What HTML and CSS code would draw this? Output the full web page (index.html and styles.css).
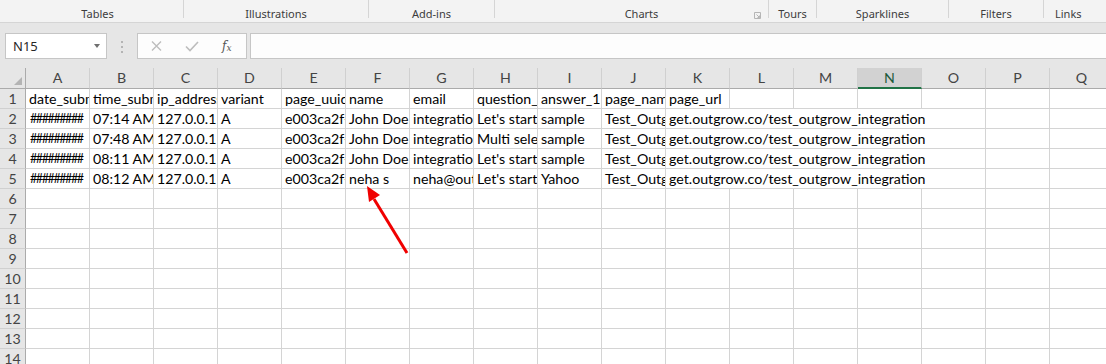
FILE: index.html
```html
<!DOCTYPE html>
<html lang="en">
<head>
    <meta charset="UTF-8">
    <title>Book1 - Excel</title>
    <link rel="stylesheet" href="styles.css">
</head>
<body>
    <div class="ribbon">
        <div class="ribbon-group group-tables">Tables</div>
        <div class="ribbon-sep"></div>
        <div class="ribbon-group group-illustrations">Illustrations</div>
        <div class="ribbon-sep"></div>
        <div class="ribbon-group group-addins">Add-ins</div>
        <div class="ribbon-sep"></div>
        <div class="ribbon-group group-charts">
            <span class="group-label">Charts</span>
            <svg class="launcher" width="7" height="7" viewBox="0 0 7 7" fill="none" stroke="#b5b5b5" stroke-width="1">
                <path d="M0.5 6.5V0.5h6v6z"></path>
                <path d="M2.5 2.5l3 3M3.5 5.5h2v-2"></path>
            </svg>
        </div>
        <div class="ribbon-sep"></div>
        <div class="ribbon-group group-tours">Tours</div>
        <div class="ribbon-sep"></div>
        <div class="ribbon-group group-sparklines">Sparklines</div>
        <div class="ribbon-sep"></div>
        <div class="ribbon-group group-filters">Filters</div>
        <div class="ribbon-sep"></div>
        <div class="ribbon-group group-links">Links</div>
    </div>

    <div class="formula-bar">
        <div class="name-box">
            <span class="name-value">N15</span>
            <span class="name-caret"></span>
        </div>
        <div class="grip">
            <span></span><span></span><span></span>
        </div>
        <div class="fx-box">
            <svg class="fx-cancel" width="11" height="10" viewBox="0 0 11 10" fill="none" stroke="#bdbdbd" stroke-width="1.4">
                <path d="M1 0.5l9 9M10 0.5l-9 9"></path>
            </svg>
            <svg class="fx-enter" width="14" height="11" viewBox="0 0 14 11" fill="none" stroke="#bdbdbd" stroke-width="1.6">
                <path d="M1 5.5l4 4 8-8.5"></path>
            </svg>
            <span class="fx-label"><i>f</i><sub>x</sub></span>
        </div>
        <div class="formula-input"></div>
    </div>

    <div class="sheet">
        <div class="grid"></div>
        <svg class="arrow" width="1106" height="296" viewBox="0 0 1106 296">
            <line x1="407" y1="185" x2="374" y2="131" stroke="#f00000" stroke-width="3"></line>
            <polygon points="367,118 380,127 369,134" fill="#f00000"></polygon>
        </svg>
    </div>

    <script>
        // 시트 데이터 (1~5행)
        const columns = 'ABCDEFGHIJKLMNOPQ'.split('');
        const sheetRows = [
            ['date_submitted', 'time_submitted', 'ip_address', 'variant', 'page_uuid', 'name', 'email', 'question_1', 'answer_1', 'page_name', 'page_url'],
            ['#########', '07:14 AM UTC', '127.0.0.1', 'A', 'e003ca2f-c41d', 'John Doe', 'integration@outgrow.co', "Let's start the quiz", 'sample', 'Test_Outgrow_Integration', 'get.outgrow.co/test_outgrow_integration'],
            ['#########', '07:48 AM UTC', '127.0.0.1', 'A', 'e003ca2f-c41d', 'John Doe', 'integration@outgrow.co', 'Multi select question', 'sample', 'Test_Outgrow_Integration', 'get.outgrow.co/test_outgrow_integration'],
            ['#########', '08:11 AM UTC', '127.0.0.1', 'A', 'e003ca2f-c41d', 'John Doe', 'integration@outgrow.co', "Let's start the quiz", 'sample', 'Test_Outgrow_Integration', 'get.outgrow.co/test_outgrow_integration'],
            ['#########', '08:12 AM UTC', '127.0.0.1', 'A', 'e003ca2f-c41d', 'neha s', 'neha@outgrow.co', "Let's start the quiz", 'Yahoo', 'Test_Outgrow_Integration', 'get.outgrow.co/test_outgrow_integration'],
        ];
        const totalRows = 14;
        const selectedColumn = 'N';

        const grid = document.querySelector('.grid');

        function addCell(className, text) {
            const cell = document.createElement('div');
            cell.className = className;
            if (text) cell.textContent = text;
            grid.appendChild(cell);
            return cell;
        }

        // 열 머리글
        addCell('corner');
        columns.forEach(col => {
            addCell(col === selectedColumn ? 'col-head selected' : 'col-head', col);
        });

        // 행
        for (let r = 1; r <= totalRows; r++) {
            addCell('row-head', String(r));
            const values = sheetRows[r - 1] || [];
            for (let c = 0; c < columns.length; c++) {
                const text = values[c] || '';
                // 긴 URL은 빈 옆 칸(L~O)으로 넘쳐 보임
                if (r > 1 && c === 10 && text) {
                    addCell('cell spill', text);
                    c += 4;
                    continue;
                }
                // 날짜 칸이 좁아서 ### 표시
                addCell(text.startsWith('#') ? 'cell hash' : 'cell', text);
            }
        }
    </script>
</body>
</html>
```

FILE: styles.css
```css
* {
    margin: 0;
    padding: 0;
    box-sizing: border-box;
}

body {
    width: 1106px;
    height: 364px;
    overflow: hidden;
    background-color: #ffffff;
    font-family: Lato, 'Liberation Sans', sans-serif;
}

/* ribbon group labels */
.ribbon {
    display: flex;
    align-items: flex-start;
    height: 23px;
    background-color: #f3f3f3;
    border-bottom: 1px solid #d5d5d5;
    font-family: 'Noto Sans', 'Open Sans', sans-serif;
    font-size: 11px;
    color: #3c3c3c;
    white-space: nowrap;
    overflow: hidden;
}

.ribbon-group {
    display: flex;
    align-items: center;
    justify-content: center;
    height: 22px;
    padding-top: 5px;
    flex-shrink: 0;
}

.ribbon-sep {
    width: 1px;
    height: 18px;
    background-color: #d5d5d5;
    flex-shrink: 0;
}

.group-tables {
    width: 183px;
    padding-left: 12px;
}

.group-illustrations {
    width: 184px;
}

.group-addins {
    width: 125px;
}

.group-charts {
    width: 273px;
}

.group-charts .group-label {
    flex: 1;
    text-align: center;
    padding-left: 34px;
}

.launcher {
    margin: 3px 7px 0 0;
}

.group-tours {
    width: 47px;
}

.group-sparklines {
    width: 131px;
}

.group-filters {
    width: 94px;
}

.group-links {
    width: 62px;
    justify-content: flex-start;
    padding-left: 11px;
}

/* formula bar */
.formula-bar {
    display: flex;
    align-items: flex-start;
    height: 45px;
    padding: 10px 0 0 5px;
    background-color: #e6e6e6;
}

.name-box {
    display: flex;
    align-items: center;
    justify-content: space-between;
    width: 102px;
    height: 26px;
    padding: 0 6px 0 7px;
    background-color: #ffffff;
    border: 1px solid #c6c6c6;
    font-family: 'Noto Sans', 'Open Sans', sans-serif;
    font-size: 13px;
    color: #262626;
}

.name-caret {
    width: 0;
    height: 0;
    border-left: 3.5px solid transparent;
    border-right: 3.5px solid transparent;
    border-top: 4px solid #6f6f6f;
    margin-bottom: 1px;
}

.grip {
    display: flex;
    flex-direction: column;
    gap: 3px;
    margin: 8px 14px 0 14px;
}

.grip span {
    width: 2px;
    height: 2px;
    background-color: #b4b4b4;
}

.fx-box {
    display: flex;
    align-items: center;
    width: 110px;
    height: 26px;
    padding-left: 13px;
    background-color: #fdfdfd;
    border: 1px solid #c6c6c6;
}

.fx-enter {
    margin-left: 23px;
}

.fx-label {
    margin-left: 23px;
    font-family: 'DejaVu Serif', 'Liberation Serif', serif;
    font-size: 12px;
    color: #555555;
    line-height: 1;
}

.fx-label sub {
    font-size: 9px;
    font-style: italic;
    vertical-align: -1px;
}

.formula-input {
    flex: 1;
    height: 26px;
    margin-left: 3px;
    background-color: #fdfdfd;
    border: 1px solid #c6c6c6;
    border-right: none;
}

/* worksheet */
.sheet {
    position: relative;
}

.grid {
    display: grid;
    grid-template-columns: 26px repeat(17, 64px);
    grid-template-rows: 21px;
    grid-auto-rows: 20px;
    font-size: 14.2px;
}

.corner,
.col-head,
.row-head {
    background-color: #e6e6e6;
    color: #444444;
    text-align: center;
    line-height: 19px;
}

.corner {
    position: relative;
    border-right: 1px solid #ababab;
    border-bottom: 1px solid #ababab;
}

.corner::after {
    content: '';
    position: absolute;
    right: 3px;
    bottom: 3px;
    width: 0;
    height: 0;
    border-left: 8px solid transparent;
    border-bottom: 8px solid #b4b4b4;
}

.col-head {
    border-right: 1px solid #d0d0d0;
    border-bottom: 1px solid #ababab;
    line-height: 20px;
}

.col-head.selected {
    background-color: #d2d2d2;
    color: #1e5c3c;
    border-bottom: 2px solid #217346;
}

.row-head {
    border-right: 1px solid #ababab;
    border-bottom: 1px solid #d0d0d0;
}

.cell {
    padding: 0 2px 0 3px;
    border-right: 1px solid #d4d4d4;
    border-bottom: 1px solid #d4d4d4;
    line-height: 19px;
    color: #000000;
    white-space: nowrap;
    overflow: hidden;
}

.cell.hash {
    padding-left: 4px;
    font-size: 12.5px;
    letter-spacing: -1.4px;
}

.cell.spill {
    grid-column: span 5;
}

.arrow {
    position: absolute;
    top: 0;
    left: 0;
    pointer-events: none;
}
```
